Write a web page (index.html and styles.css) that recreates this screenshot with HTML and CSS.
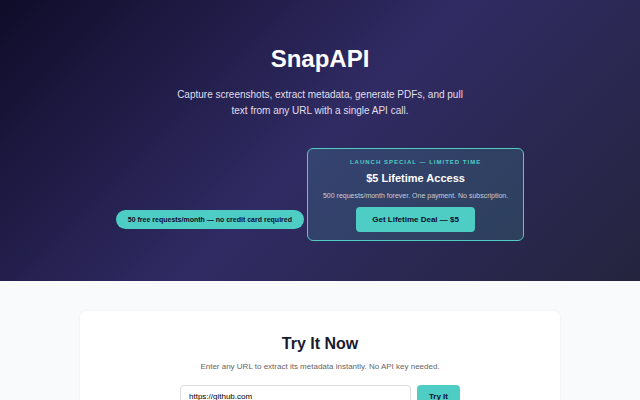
FILE: index.html
```
<!DOCTYPE html>
<html lang="en">
<head>
  <meta charset="UTF-8">
  <meta name="viewport" content="width=device-width, initial-scale=1.0">
  <title>SnapAPI</title>
  <link rel="stylesheet" href="styles.css">
</head>
<body>
  <header class="hero">
    <h1>SnapAPI</h1>
    <p class="tagline">Capture screenshots, extract metadata, generate PDFs, and pull text from any URL with a single API call.</p>
    <div class="offers">
      <span class="badge">50 free requests/month — no credit card required</span>
      <div class="deal">
        <div class="deal-label">LAUNCH SPECIAL — LIMITED TIME</div>
        <div class="deal-title">$5 Lifetime Access</div>
        <div class="deal-text">500 requests/month forever. One payment. No subscription.</div>
        <a class="deal-btn" href="#">Get Lifetime Deal — $5</a>
      </div>
    </div>
  </header>

  <main class="container">
    <section class="demo">
      <h2>Try It Now</h2>
      <p><label for="demoUrl">Enter any URL to extract its metadata instantly. No API key needed.</label></p>
      <form class="demo-form">
        <input type="url" id="demoUrl" value="https://github.com">
        <button type="button">Try It</button>
      </form>
    </section>
  </main>
</body>
</html>
```
FILE: styles.css
```
* {
  margin: 0;
  padding: 0;
  box-sizing: border-box;
}

body {
  font-family: "Liberation Sans", Arial, sans-serif;
  font-size: 8px;
  line-height: 13px;
  background: #f8fafc;
  color: #1a1a2e;
}

.hero {
  background: linear-gradient(135deg, #0f0c29, #302b63, #24243e);
  color: #fff;
  padding: 40px 20px;
  text-align: center;
}

.hero h1 {
  font-size: 24px;
  line-height: 38px;
  margin-bottom: 9px;
}

.tagline {
  font-size: 10px;
  line-height: 16px;
  max-width: 300px;
  margin: 0 auto 29px;
  color: #e0dfea;
}

.offers {
  display: flex;
  justify-content: center;
  align-items: last baseline;
  gap: 3px;
}

.badge {
  background: #4ecdc4;
  color: #0f0c29;
  font-size: 7px;
  font-weight: bold;
  line-height: 11px;
  padding: 4px 12px;
  border-radius: 10px;
}

.deal {
  background: rgba(78, 205, 196, 0.15);
  border: 1px solid #4ecdc4;
  border-radius: 6px;
  padding: 8px 15px;
}

.deal-label {
  color: #4ecdc4;
  font-size: 6px;
  font-weight: bold;
  line-height: 11px;
  letter-spacing: 1px;
}

.deal-title {
  font-size: 11px;
  font-weight: bold;
  line-height: 18px;
  margin: 1px 0 3px;
}

.deal-text {
  color: #c9cdd8;
  font-size: 7px;
  line-height: 11px;
  margin-bottom: 6px;
}

.deal-btn {
  display: inline-block;
  background: #4ecdc4;
  color: #0f0c29;
  font-size: 8px;
  font-weight: bold;
  text-decoration: none;
  padding: 6px 16px;
  border-radius: 4px;
}

.container {
  max-width: 520px;
  margin: 0 auto;
  padding: 30px 20px;
}

.demo {
  background: #fff;
  border-radius: 6px;
  padding: 20px;
  text-align: center;
  box-shadow: 0 0 2px rgba(0, 0, 0, 0.08);
}

.demo h2 {
  font-size: 16px;
  line-height: 26px;
  margin-bottom: 3px;
}

.demo p {
  color: #666;
  margin-bottom: 12px;
}

.demo-form {
  display: flex;
  gap: 6px;
  max-width: 280px;
  margin: 0 auto;
}

.demo-form input {
  flex: 1;
  min-width: 0;
  font: inherit;
  padding: 4px 8px;
  border: 1px solid #ddd;
  border-radius: 4px;
}

.demo-form button {
  background: #4ecdc4;
  color: #0f0c29;
  font: inherit;
  font-weight: bold;
  padding: 5px 12px;
  border: none;
  border-radius: 4px;
}
```
